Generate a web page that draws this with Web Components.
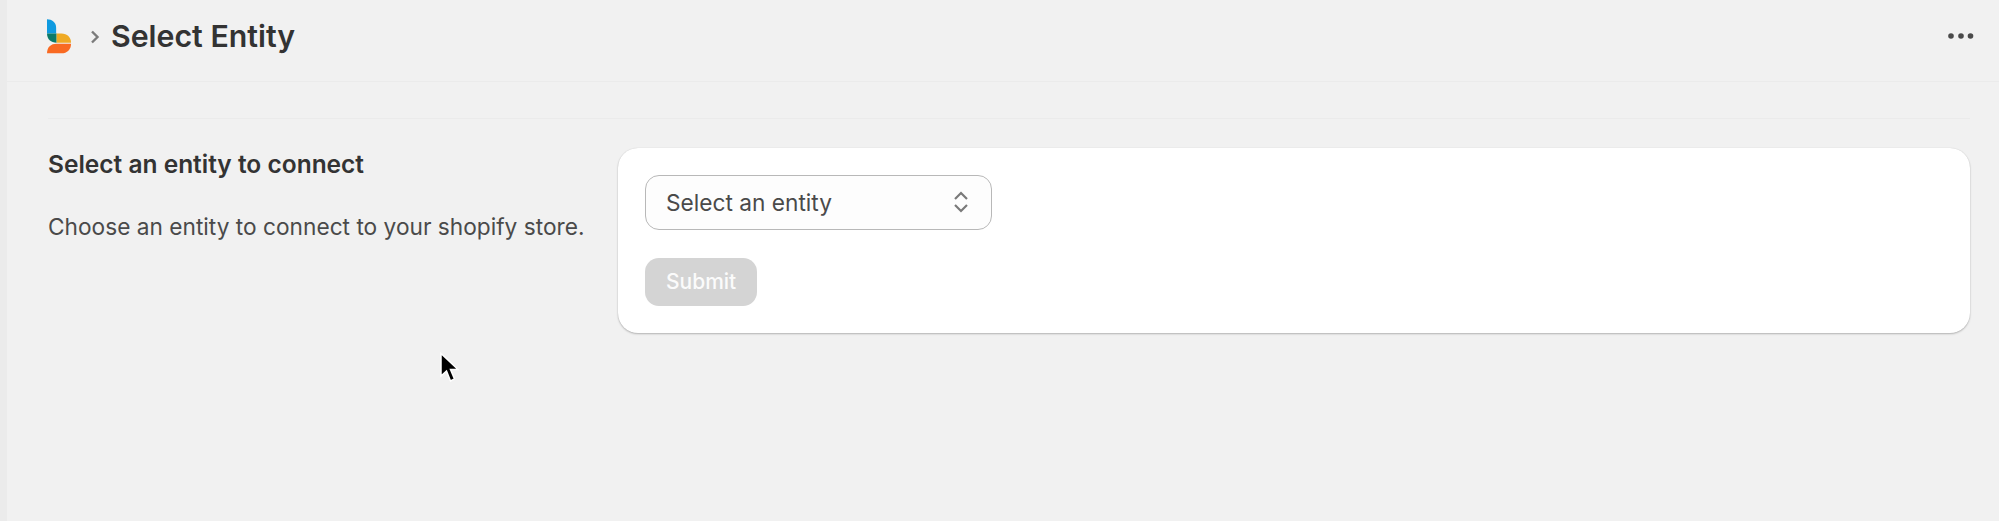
<!doctype html>
<html>
<head>
<meta charset="utf-8">
<title>Select Entity</title>
<style>
html, body { margin: 0; height: 100%; background: #f1f1f1; }
body { font-family: Inter, "Liberation Sans", sans-serif; overflow: hidden; }
</style>
</head>
<body>
<app-shell>
  <page-header title-text="Select Entity"></page-header>
  <settings-section heading="Select an entity to connect" description="Choose an entity to connect to your shopify store.">
    <entity-select placeholder="Select an entity"></entity-select>
    <submit-button>Submit</submit-button>
  </settings-section>
</app-shell>
<script>
const define = (name, html, cls = HTMLElement) => {
  const template = document.createElement("template");
  template.innerHTML = html;
  customElements.define(name, class extends cls {
    constructor() {
      super();
      this.attachShadow({ mode: "open" });
      this.shadowRoot.appendChild(template.content.cloneNode(true));
      this.shadowRoot.querySelectorAll("[data-attr]").forEach((el) => {
        el.textContent = this.getAttribute(el.dataset.attr);
      });
    }
  });
};

define("app-shell", `
<style>
:host { display: flex; height: 521px; position: relative; color: #303030; }
.rail { width: 7px; flex: none; background: #ebebeb; }
main { flex: 1; min-width: 0; }
.cursor { position: absolute; left: 439px; top: 352px; }
</style>
<div class="rail"></div>
<main><slot></slot></main>
<svg class="cursor" width="20" height="32" viewBox="0 0 20 32">
  <path d="M2 1.500V24l5.500-5 4 10 4-2-4-9.500H19z" fill="#000" stroke="#fff" stroke-width="1.500"/>
</svg>`);

define("page-header", `
<style>
:host { display: flex; align-items: center; height: 82px; box-sizing: border-box; border-bottom: 1px solid #ebebeb; padding: 0 25px 9px 40px; }
svg { display: block; flex: none; }
.sep { margin: 2px 11px 0 18px; }
h1 { margin: 0; font: 600 30.300px/36px Inter, "Liberation Sans", sans-serif; color: #333; flex: 1; }
</style>
<svg width="25" height="35" viewBox="0 0 26 36">
  <path d="M0 0c5 0 9.500 3 9.500 9v6H0z" fill="#0f9ae0"/>
  <path d="M0 15h10v9.500C4 24.500 0 21 0 15z" fill="#0b7a68"/>
  <path d="M10 15h5c6 0 10 4 10 9.500H10z" fill="#efaa24"/>
  <path d="M0 35.500C0 29 4 25.500 10 25.500h15c0 6-4 10-10 10z" fill="#f96a22"/>
</svg>
<svg class="sep" width="10" height="16" viewBox="0 0 10 16"><path d="M2 2.500l5.500 5.500-5.500 5.500" fill="none" stroke="#7b7b7b" stroke-width="2.400"/></svg>
<h1 data-attr="title-text"></h1>
<svg width="26" height="6" viewBox="0 0 26 6"><circle cx="3" cy="3" r="2.800" fill="#4a4a4a"/><circle cx="13" cy="3" r="2.800" fill="#4a4a4a"/><circle cx="22.500" cy="3" r="2.800" fill="#4a4a4a"/></svg>`);

define("settings-section", `
<style>
:host { display: block; margin: 36px 29px 0 41px; padding-top: 29px; border-top: 1px solid #ebebeb; }
.row { display: grid; grid-template-columns: 570px 1fr; }
h2 { margin: 0; font: 600 24.500px/28px Inter, "Liberation Sans", sans-serif; color: #333; }
p { margin: 35px 0 0; font: 400 22.700px/28px Inter, "Liberation Sans", sans-serif; color: #4a4a4a; }
.aside { padding-top: 2px; }
.card { background: #fff; border-radius: 20px; height: 185px; box-sizing: border-box; padding: 27px; box-shadow: 0 1px 2px rgba(0,0,0,.25), 0 0 1px rgba(0,0,0,.14); display: flex; flex-direction: column; align-items: flex-start; gap: 28px; }
</style>
<div class="row">
  <div class="aside"><h2 data-attr="heading"></h2><p data-attr="description"></p></div>
  <div class="card"><slot></slot></div>
</div>`);

define("entity-select", `
<style>
:host { display: flex; align-items: center; justify-content: space-between; width: 347px; height: 56px; box-sizing: border-box; padding: 0 22px 0 20px; border: 1.500px solid #b8b8b8; border-radius: 14px; background: #fdfdfd; font: 400 22.700px/28px Inter, "Liberation Sans", sans-serif; color: #4a4a4a; }
svg { display: block; }
span { padding-top: 2px; }
</style>
<span data-attr="placeholder"></span>
<svg width="16" height="22" viewBox="0 0 16 22"><path d="M2 8l6-6 6 6M2 14l6 6 6-6" fill="none" stroke="#7a7a7a" stroke-width="2.200"/></svg>`);

define("submit-button", `
<style>
:host { display: inline-flex; align-items: center; height: 49px; box-sizing: border-box; padding: 1px 21px 0; border-radius: 14px; background: #d4d4d4; color: #fbfbfb; font: 500 21px/28px Inter, "Liberation Sans", sans-serif; }
</style>
<slot></slot>`);
</script>
</body>
</html>
